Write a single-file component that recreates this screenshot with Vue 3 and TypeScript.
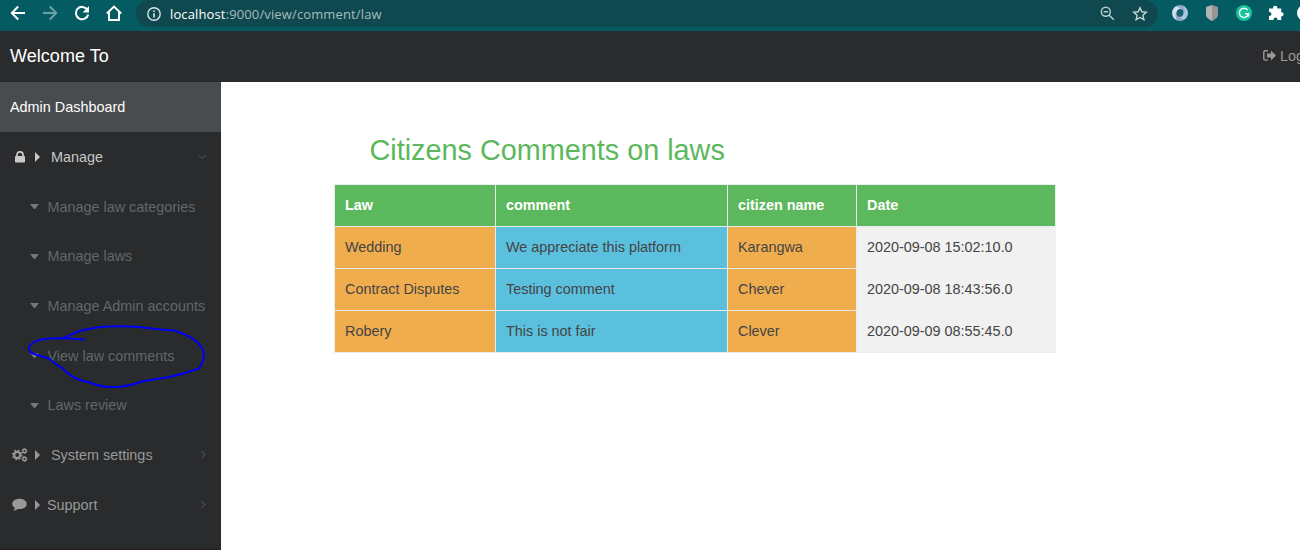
<script setup lang="ts">
interface MenuEntry { label: string; icon: 'lock' | 'cogs' | 'chat' | 'none'; kind: 'top' | 'sub'; open?: boolean; tight?: boolean }
interface CommentRow { law: string; comment: string; citizen: string; date: string }

const menu: MenuEntry[] = [
  { label: 'Manage', icon: 'lock', kind: 'top', open: true },
  { label: 'Manage law categories', icon: 'none', kind: 'sub' },
  { label: 'Manage laws', icon: 'none', kind: 'sub' },
  { label: 'Manage Admin accounts', icon: 'none', kind: 'sub' },
  { label: 'View law comments', icon: 'none', kind: 'sub' },
  { label: 'Laws review', icon: 'none', kind: 'sub' },
  { label: 'System settings', icon: 'cogs', kind: 'top' },
  { label: 'Support', icon: 'chat', kind: 'top', tight: true },
]

const rows: CommentRow[] = [
  { law: 'Wedding', comment: 'We appreciate this platform', citizen: 'Karangwa', date: '2020-09-08 15:02:10.0' },
  { law: 'Contract Disputes', comment: 'Testing comment', citizen: 'Chever', date: '2020-09-08 18:43:56.0' },
  { law: 'Robery', comment: 'This is not fair', citizen: 'Clever', date: '2020-09-09 08:55:45.0' },
]
</script>

<template>
  <div class="window">
    <div class="browser">
      <svg class="nav-icon" width="16" height="16" viewBox="0 0 16 16"><path d="M15 8H2M8.200 1.500 1.800 8l6.400 6.500" fill="none" stroke="#fff" stroke-width="2" /></svg>
      <svg class="nav-icon faded" width="16" height="16" viewBox="0 0 16 16"><path d="M1 8h13M7.800 1.500 14.200 8l-6.400 6.500" fill="none" stroke="#fff" stroke-width="2" /></svg>
      <svg class="nav-icon" width="16" height="16" viewBox="0 0 16 16"><path d="M13.300 4.600A6.200 6.200 0 1 0 14.200 9.500" fill="none" stroke="#fff" stroke-width="2" /><path d="M15 1v6.600H8.600z" fill="#fff" /></svg>
      <svg class="nav-icon" width="18" height="16" viewBox="0 0 18 16"><path d="M1.800 8.500 9 1.600l7.200 6.900M4 7v8h10V7" fill="none" stroke="#fff" stroke-width="2" /></svg>
      <div class="address">
        <svg width="14" height="14" viewBox="0 0 14 14"><circle cx="7" cy="7" r="6.2" fill="none" stroke="#dce8e9" stroke-width="1.4" /><path d="M7 6.200v4.200M7 3.400v1.600" stroke="#dce8e9" stroke-width="1.6" /></svg>
        <span class="url"><b>localhost</b>:9000/view/comment/law</span>
        <svg class="search" width="15" height="15" viewBox="0 0 15 15"><circle cx="5.8" cy="5.8" r="4.5" fill="none" stroke="#b9cccd" stroke-width="1.5" /><path d="M9 9l4.800 4.800M3.600 5.800H8" fill="none" stroke="#b9cccd" stroke-width="1.5" /></svg>
        <svg class="star" width="16" height="16" viewBox="0 0 16 16"><path d="M8 1.800l1.800 4 4.500.5-3.400 3 1 4.400L8 11.500l-3.900 2.200 1-4.400-3.400-3 4.500-.5z" fill="none" stroke="#c5d5d6" stroke-width="1.4" /></svg>
      </div>
      <div class="extensions">
        <svg width="16" height="16" viewBox="0 0 16 16"><circle cx="8" cy="8" r="5.7" fill="none" stroke="#8ba7cd" stroke-width="4.6" /><path d="M4 1.400A7.700 7.700 0 0 0 5 15C2.500 11 3 5 9 3.200z" fill="#d5e0ef" /><path d="M12 14.600A7.700 7.700 0 0 0 11 1c3 4.400 2 9-4 11.800z" fill="#b0c5e0" /><ellipse cx="8" cy="8" rx="3.1" ry="3.8" fill="#17606d" /></svg>
        <svg width="16" height="16" viewBox="0 0 16 16"><path d="M8 0 2 2v8C2 12.500 5 14.500 8 16z" fill="#b4b4b4" /><path d="m8 0 6 2v8C14 12.500 11 14.500 8 16z" fill="#969696" /></svg>
        <svg width="16" height="16" viewBox="0 0 16 16"><circle cx="8" cy="8" r="8" fill="#15c39a" /><path d="M11.600 5A4.600 4.600 0 1 0 12.500 8.800H9.200M12.600 8.600v3" fill="none" stroke="#fff" stroke-width="1.4" /></svg>
        <svg width="16" height="16" viewBox="0 0 16 16"><path d="M1 3.500h4V3a2.200 2.200 0 0 1 4.400 0v.5h3.800v3.700h.3a2.100 2.100 0 0 1 0 4.200h-.3V15H9.500v-.5a2 2 0 0 0-4 0v.5H1v-4h.4a2 2 0 0 0 0-4H1z" fill="#fff" /></svg>
      </div>
      <div class="avatar"></div>
    </div>

    <header class="topbar">
      <span class="brand">Welcome To</span>
      <span class="logout">
        <svg width="13" height="11" viewBox="0 0 13 11"><path d="M5 .8H2.400Q.8.8.8 2.400v6.100q0 1.600 1.600 1.600H5" fill="none" stroke="currentColor" stroke-width="1.4" /><path d="M4 3.500h4V.5L13 5.400 8 10.400V7.400H4z" fill="currentColor" /></svg>
        Logout
      </span>
    </header>

    <div class="body">
      <nav class="sidebar">
        <div class="heading">Admin Dashboard</div>
        <div v-for="item in menu" :key="item.label" class="item" :class="[item.kind, { open: item.open, tight: item.tight }]">
          <span v-if="item.kind === 'top'" class="item-icon">
            <svg v-if="item.icon === 'lock'" width="10" height="12" viewBox="0 0 10 12"><path d="M2 5.500V3.800a3 3 0 0 1 6 0v1.700" fill="none" stroke="currentColor" stroke-width="1.7" /><rect y="5" width="10" height="6.5" rx=".8" fill="currentColor" /></svg>
            <svg v-else-if="item.icon === 'cogs'" width="16" height="14" viewBox="0 0 16 14">
              <circle cx="5.2" cy="7" r="3.1" fill="none" stroke="currentColor" stroke-width="2.2" />
              <circle cx="5.2" cy="7" r="4.7" fill="none" stroke="currentColor" stroke-width="1.3" stroke-dasharray="1.85 1.84" />
              <g fill="none" stroke="currentColor"><circle cx="12.5" cy="3" r="1.7" stroke-width="1.4" /><circle cx="12.5" cy="3" r="2.5" stroke-dasharray="1.3 1.3" /><circle cx="12.5" cy="11" r="1.7" stroke-width="1.4" /><circle cx="12.5" cy="11" r="2.5" stroke-dasharray="1.3 1.3" /></g>
            </svg>
            <svg v-else width="15" height="13" viewBox="0 0 15 13"><path d="M7.500.8C11.500.8 14.700 3 14.700 5.900S11.500 11 7.500 11q-.9 0-1.700-.1Q4 12.600 1.200 12.800q1.500-1.200 1.600-2.600Q.3 8.500.3 5.900C.3 3 3.500.8 7.500.8z" fill="currentColor" /></svg>
          </span>
          <i class="caret"></i>
          <span class="label">{{ item.label }}</span>
          <svg v-if="item.kind === 'top'" class="chevron" width="9" height="9" viewBox="0 0 9 9"><path :d="item.open ? 'M.7 2.800 4.300 6.400 7.900 2.800' : 'M3.500 1 7.100 4.600 3.500 8.200'" fill="none" stroke="#4a4d50" stroke-width="1.1" /></svg>
        </div>
        <svg class="scribble" width="184" height="70" viewBox="26 322 184 70"><path d="M84 339.600C66 338 43 337 34 342C27 346 28 352 33 353.500L50 359Q53 363 61 367Q69 375 75 378Q82 381 90 382.500Q98 386.500 111 387Q126 387.500 142 381.500Q154 379 167 377.500Q184 374 199 368.500Q204 361 204 354Q204 349 197 342Q189 335 174 330.500L161 329.500C143 327 116 325 99 327.300Q80 330 72 334Q67 337 62 338.300" fill="none" stroke="#0000f4" stroke-width="2" stroke-linecap="round" stroke-linejoin="round" /></svg>
        <div class="baseline"></div>
      </nav>

      <main class="content">
        <h2>Citizens Comments on laws</h2>
        <table>
          <colgroup><col class="c1" /><col class="c2" /><col class="c3" /><col class="c4" /></colgroup>
          <thead><tr><th>Law</th><th>comment</th><th>citizen name</th><th>Date</th></tr></thead>
          <tbody>
            <tr v-for="row in rows" :key="row.date">
              <td class="warning">{{ row.law }}</td><td class="info">{{ row.comment }}</td><td class="warning">{{ row.citizen }}</td><td class="plain">{{ row.date }}</td>
            </tr>
          </tbody>
        </table>
      </main>
    </div>
  </div>
</template>

<style>
body { margin: 0; overflow: hidden; }
</style>
<style scoped>
* { box-sizing: border-box; }
.window { width: 1300px; height: 550px; overflow: hidden; display: flex; flex-direction: column; background: #fff; font: 14.4px/20px "Liberation Sans", Arial, sans-serif; }
svg { display: block; flex: none; }
.browser { height: 31px; flex: none; display: flex; background: #045c62; padding-left: 10px; align-items: flex-start; }
.nav-icon { margin: 5px 16px 0 0; }
.nav-icon:nth-child(4) { margin: 5px 13px 0 -1px; }
.faded { opacity: .42; }
.address { width: 1022px; height: 27px; flex: none; background: #0f484e; border-radius: 14px; display: flex; align-items: center; padding-left: 11px; }
.url { margin-left: 9px; font: 13px/18px "Open Sans", "Noto Sans", sans-serif; letter-spacing: .13px; color: #a5bcbe; }
.url b { font-weight: 400; color: #fff; }
.search { margin-left: auto; margin-right: 17px; }
.star { margin-right: 10px; }
.extensions { display: flex; gap: 16px; margin: 5px 0 0 14px; }
.avatar { width: 16px; height: 16px; flex: none; margin: 5px 0 0 13px; border-radius: 50%; background: #fff; }
.topbar { height: 51px; flex: none; display: flex; align-items: center; background: #2a2b2d; padding: 0 0 2px 10px; }
.brand { font-size: 18px; color: #fff; letter-spacing: .05px; }
.logout { margin-left: auto; width: 37px; display: flex; gap: 4px; align-items: center; white-space: nowrap; color: #999; }
.body { flex: 1; min-height: 0; display: flex; }
.sidebar { position: relative; width: 221px; flex: none; background: #2a2b2d; display: flex; flex-direction: column; }
.heading { height: 50px; flex: none; padding-left: 10px; line-height: 50px; background: #494c4e; color: #fff; }
.item { height: 49.7px; flex: none; display: flex; align-items: center; padding: 0 14px 0 10px; color: #999; }
.item.open { color: #c8c8c8; }
.item-icon { width: 19px; display: flex; justify-content: center; }
.caret { width: 5px; margin-left: 6px; border: 5px solid transparent; border-left-color: currentColor; border-right: 0; }
.label { margin-left: 11px; white-space: nowrap; }
.tight .label { margin-left: 7px; }
.chevron { margin-left: auto; }
.sub { color: #60686c; padding-left: 29.500px; }
.sub .caret { width: 9px; margin: 0; border: 4.500px solid transparent; border-top: 5px solid #71797d; border-bottom: 0; }
.sub .label { margin-left: 9px; }
.scribble { position: absolute; left: 26px; top: 240px; }
.baseline { margin-top: auto; height: 2px; background: #2b2026; }
.content { flex: 1; padding: 51px 0 0 113px; }
h2 { margin: 0 0 17px; padding-left: 35.500px; font: 28.800px/34px "Liberation Sans", Arial, sans-serif; color: #5cb85c; }
table { width: 722px; table-layout: fixed; border-collapse: collapse; color: #444; }
.c1 { width: 161px; } .c2 { width: 232px; } .c3 { width: 129px; } .c4 { width: 199px; }
th, td { height: 42px; padding: 0 10px 1px; border: 1px solid #e9ecef; text-align: left; }
th { background: #5cb85c; color: #fff; font-weight: 700; }
.warning { background: #f0ad4e; }
.info { background: #5bc0de; }
.plain { background: #f1f1f1; border-color: #eee; }
</style>
